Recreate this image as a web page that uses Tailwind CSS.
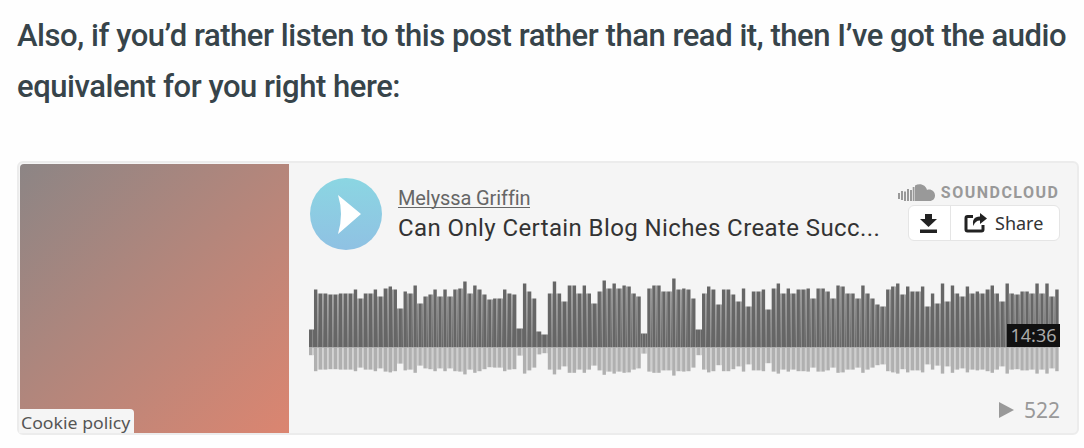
<!DOCTYPE html>
<html lang="en">
<head>
    <meta charset="UTF-8">
    <meta name="viewport" content="width=device-width, initial-scale=1.0">
    <title>Listen to this post</title>
    <script src="https://cdn.jsdelivr.net/npm/@tailwindcss/browser@4"></script>
</head>
<body class="bg-[#fefefe] overflow-hidden">
    <p class="pt-[10px] pl-[17px] h-[161px] text-[31px] leading-[51px] font-medium tracking-[-0.45px] text-[#37444a] font-['Roboto',sans-serif] whitespace-nowrap">
        Also, if you’d rather listen to this post rather than read it, then I’ve got the audio<br>
        equivalent for you right here:
    </p>

    <!-- Player -->
    <div class="ml-[17px] w-[1062px] h-[274px] flex bg-[#f5f5f5] border-2 border-[#ececec] rounded-md">
        <!-- Artwork -->
        <div class="ml-px mt-px w-[269px] h-[269px] flex items-end bg-linear-to-br from-[#8c8585] via-[#b5867b] to-[#db8570] rounded-tl-sm">
            <a class="-ml-px h-[24px] w-[115px] pl-[2px] bg-[#f5f5f5] rounded-tr text-[17px] leading-[27px] text-[#555] font-['Noto_Sans',sans-serif] whitespace-nowrap"><span class="inline-block origin-left scale-x-[1.04]">Cookie policy</span></a>
        </div>

        <div class="ml-[20px] w-[751px] flex flex-col">
            <div class="flex h-[112px]">
                <button class="ml-px mt-[15px] size-[72px] shrink-0 rounded-full bg-linear-to-b from-[#8bd6e2] to-[#8fc1e3]">
                    <svg class="size-[72px]" viewBox="0 0 72 72"><path d="M28 17 L51 36 L28 56 Q34 36 28 17Z" fill="#fff"/></svg>
                </button>
                <div class="ml-[16px] mt-[21px] w-[499px] font-['Roboto',sans-serif] whitespace-nowrap">
                    <div class="h-[29px] text-[20px] leading-[28px] text-[#666]"><a class="inline-block h-[24px] border-b border-[#666] tracking-[-0.1px]">Melyssa Griffin</a></div>
                    <div class="text-[24px] leading-[31px] text-[#333] tracking-[0.4px]">Can Only Certain Blog Niches Create Succ...</div>
                </div>
                <div class="mt-[19px] ml-auto flex flex-col items-end">
                    <div class="flex items-center h-[21px] pr-[2px] text-[#999]">
                        <svg class="w-[37px] h-[17px]" viewBox="0 0 37 17" fill="currentColor">
                            <path d="M0 9h2v6H0zM3 7h2v9H3zM6 7.500h2v9.500H6zM9 5h2v12H9zM12 6h2v11H12zM14.700 3h1.800v14H14.700zM17 1.500C22-1.500 28 1 29 6C33 4.500 37 7.500 37 11.500C37 14.500 35 17 31.500 17H17z"/>
                        </svg>
                        <span class="ml-[6px] text-[16px] leading-[21px] font-bold tracking-[1.5px] -mr-[1.5px] font-['Roboto',sans-serif]">SOUNDCLOUD</span>
                    </div>
                    <div class="mt-[2px] flex w-[152px] h-[36px] bg-white border border-[#e5e5e5] rounded-md text-[#222]">
                        <button class="w-[42px] pr-[2px] border-r border-[#e5e5e5] flex items-center justify-center">
                            <svg class="w-[18px] h-[19px]" viewBox="0 0 18 19" fill="currentColor"><path d="M5 0h7v5h5l-8.500 8L0 5h5zM0 15.500h17V19H0z"/></svg>
                        </button>
                        <button class="flex items-center pl-[13px] gap-[8px]">
                            <svg class="w-[23px] h-[20px]" viewBox="0 0 23 20" fill="none"><path d="M9 3.500H3.500Q2 3.500 2 5V16.500Q2 18 3.500 18H17.500Q19 18 19 16.500V12" stroke="currentColor" stroke-width="3"/><path d="M16 0L23 5.500L16 11V7.500Q11 7.500 9.500 13Q7 4 16 3.500Z" fill="currentColor"/></svg>
                            <span class="text-[18px] text-[#333] font-['Noto_Sans',sans-serif]">Share</span>
                        </button>
                    </div>
                </div>
            </div>

            <div class="relative h-[101px]">
                <svg id="waveform" class="w-[751px] h-[101px]" viewBox="0 0 751 101">
                    <defs>
                        <linearGradient id="gap" gradientUnits="userSpaceOnUse" x1="0" y1="10" x2="0" y2="73">
                            <stop offset="0" stop-color="#a5a5a5"/>
                            <stop offset="1" stop-color="#666"/>
                        </linearGradient>
                    </defs>
                </svg>
                <span class="absolute right-0 top-[49px] w-[53px] h-[23px] bg-[#111] text-center text-[18px] leading-[22px] text-[#aaa] font-['Noto_Sans',sans-serif]">14:36</span>
            </div>

            <div class="mt-[21px] flex items-center justify-end gap-[10px] text-[#999]">
                <svg class="w-[15px] h-[16px]" viewBox="0 0 15 16"><path d="M0 0L15 8L0 16Z" fill="currentColor"/></svg>
                <span class="text-[21px] leading-[26px] font-['Noto_Sans',sans-serif]">522</span>
            </div>
        </div>
    </div>

    <script>
        // Bar heights above the baseline
        const heights = [
            18, 58, 54, 54, 53, 53, 54, 54, 54, 58, 49, 54, 54, 58, 51, 59, 61, 58, 39, 56,
            54, 62, 44, 51, 53, 58, 51, 58, 51, 58, 59, 66, 54, 62, 58, 53, 48, 49, 49, 58,
            54, 53, 19, 64, 56, 49, 16, 13, 54, 66, 54, 46, 62, 62, 54, 62, 54, 44, 56, 67,
            59, 64, 59, 62, 61, 54, 51, 14, 59, 62, 62, 56, 56, 69, 58, 59, 58, 49, 18, 54,
            61, 58, 43, 58, 58, 53, 46, 59, 41, 56, 56, 58, 38, 59, 64, 54, 59, 54, 58, 58,
            59, 49, 59, 59, 56, 49, 62, 61, 54, 54, 49, 62, 54, 49, 43, 41, 58, 61, 64, 53,
            61, 56, 56, 61, 41, 54, 44, 64, 46, 62, 54, 51, 61, 54, 56, 54, 58, 62, 54, 46,
            64, 54, 53, 56, 56, 54, 64, 54, 64, 51, 58
        ];
        const svg = document.getElementById('waveform');
        const pitch = 4.975, base = 72.5;

        function bar(x, y, w, h, fill) {
            const rect = document.createElementNS('http://www.w3.org/2000/svg', 'rect');
            rect.setAttribute('x', x);
            rect.setAttribute('y', y);
            rect.setAttribute('width', w);
            rect.setAttribute('height', h);
            rect.setAttribute('fill', fill);
            svg.appendChild(rect);
        }

        heights.forEach((h, i) => {
            const x = i * pitch;
            bar(x, base - h, 3.4, h, '#666');
            bar(x, base + 0.5, 3.4, h * 0.4, '#b0b0b0');
            if (i < heights.length - 1) {
                const low = Math.min(h, heights[i + 1]);
                bar(x + 3.4, base - low, pitch - 3.4, low, low < 25 ? '#666' : 'url(#gap)');
                bar(x + 3.4, base + 0.5, pitch - 3.4, low * 0.4, '#cecece');
            }
        });
    </script>
</body>
</html>
